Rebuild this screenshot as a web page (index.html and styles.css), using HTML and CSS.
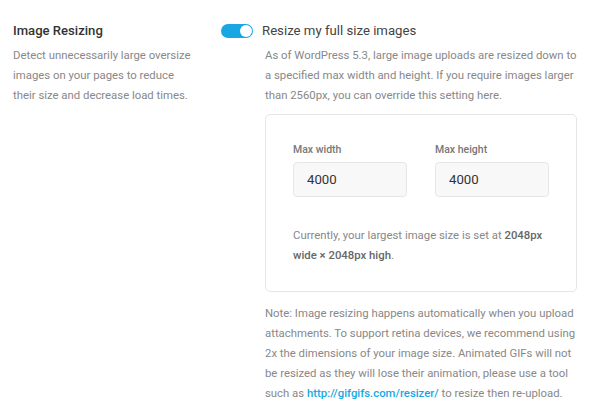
FILE: index.html
```html
<!DOCTYPE html>
<html>
<head>
<meta charset="utf-8">
<link rel="stylesheet" href="styles.css">
</head>
<body>
<div class="setting">
  <div class="setting-label">
    <h3 class="title">Image Resizing</h3>
    <p class="desc">Detect unnecessarily large oversize images on your pages to reduce their size and decrease load times.</p>
  </div>
  <div class="setting-body">
    <div class="toggle-row">
      <span class="toggle"><span class="knob"></span></span>
      <span class="toggle-label">Resize my full size images</span>
    </div>
    <div class="content">
      <p class="text intro">As of WordPress 5.3, large image uploads are resized down to a specified max width and height. If you require images larger than 2560px, you can override this setting here.</p>
      <div class="card">
        <div class="fields">
          <label class="field">
            <span class="field-label">Max width</span>
            <input class="field-input" type="text" value="4000">
          </label>
          <label class="field">
            <span class="field-label">Max height</span>
            <input class="field-input" type="text" value="4000">
          </label>
        </div>
        <p class="text current">Currently, your largest image size is set at <strong>2048px wide × 2048px high</strong>.</p>
      </div>
      <p class="text note">Note: Image resizing happens automatically when you upload attachments. To support retina devices, we recommend using 2x the dimensions of your image size. Animated GIFs will not be resized as they will lose their animation, please use a tool such as <a href="#">http://gifgifs.com/resizer/</a> to resize then re-upload.</p>
    </div>
  </div>
</div>
</body>
</html>
```
FILE: styles.css
```css
html, body {
  margin: 0;
  background: #fff;
}
body {
  font-family: Roboto, "Liberation Sans", sans-serif;
  color: #333;
}
.setting {
  display: flex;
  padding: 20px 23px 0 13px;
}
.setting-label {
  width: 208px;
  flex: none;
}
.title {
  margin: 0;
  font-size: 13.1px;
  font-weight: 500;
  line-height: 22px;
  color: #333;
}
.desc {
  max-width: 182px;
  margin: 3px 0 0;
  font-size: 11.35px;
  line-height: 20px;
  color: #888;
}
.setting-body {
  flex: 1;
  min-width: 0;
}
.toggle-row {
  display: flex;
  align-items: center;
  gap: 9px;
  height: 22px;
}
.toggle {
  display: flex;
  justify-content: flex-end;
  align-items: center;
  width: 32px;
  height: 14px;
  padding: 1px;
  box-sizing: border-box;
  border-radius: 7px;
  background: #17a8e3;
}
.knob {
  width: 12px;
  height: 12px;
  border-radius: 50%;
  background: #fff;
}
.toggle-label {
  font-size: 13.2px;
  line-height: 22px;
  color: #444;
}
.content {
  padding-left: 44px;
  margin-top: 3px;
}
.text {
  margin: 0;
  font-size: 11.35px;
  line-height: 20px;
  color: #888;
}
.intro {
  margin-bottom: 9px;
}
.card {
  border: 1px solid #e6e6e6;
  border-radius: 5px;
  padding: 27px 27px 26px;
}
.fields {
  display: grid;
  grid-template-columns: 114px 114px;
  column-gap: 28px;
}
.field {
  display: flex;
  flex-direction: column;
  gap: 4px;
}
.field-label {
  font-size: 10.5px;
  line-height: 16px;
  font-weight: 500;
  color: #777;
}
.field-input {
  box-sizing: border-box;
  width: 114px;
  height: 35px;
  margin: 0;
  padding: 0 13px;
  border: 1px solid #e6e6e6;
  border-radius: 4px;
  background: #f8f8f8;
  font-family: Roboto, "Liberation Sans", sans-serif;
  font-size: 13.2px;
  color: #333;
  outline: none;
}
.current {
  margin-top: 28px;
}
.current strong {
  font-weight: 500;
  color: #666;
}
.note {
  margin-top: 11px;
}
.note a {
  color: #17a8e3;
  text-decoration: none;
  font-weight: 500;
}
```
